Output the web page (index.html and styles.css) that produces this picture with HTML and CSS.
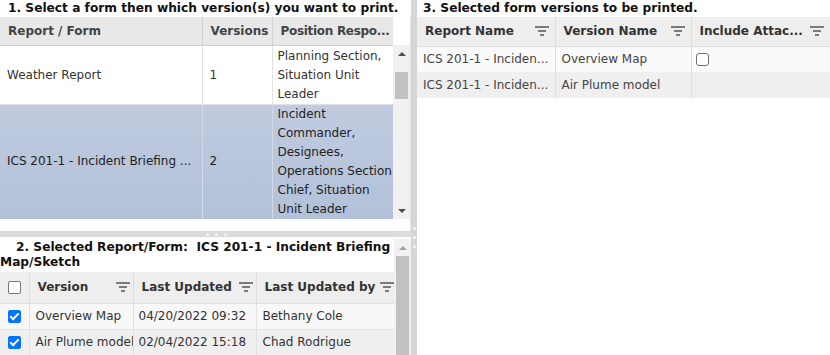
FILE: index.html
```html
<!DOCTYPE html>
<html lang="en">

<head>
    <meta charset="UTF-8">
    <title>Print Forms</title>
    <link rel="stylesheet" href="styles.css">
</head>

<body>
    <div class="layout">
        <div class="left-pane">
            <div class="section-one">
                <div class="pane-title">1. Select a form then which version(s) you want to print.</div>
                <div class="grid-wrap">
                    <div class="grid-main">
                        <table class="grid forms-grid">
                            <colgroup>
                                <col style="width: 202px">
                                <col style="width: 70px">
                                <col>
                            </colgroup>
                            <thead>
                                <tr>
                                    <th>Report / Form</th>
                                    <th>Versions</th>
                                    <th class="tight">Position Respo...</th>
                                </tr>
                            </thead>
                            <tbody>
                                <tr class="first-row">
                                    <td>Weather Report</td>
                                    <td>1</td>
                                    <td>Planning Section, Situation Unit Leader</td>
                                </tr>
                                <tr class="selected">
                                    <td>ICS 201-1 - Incident Briefing ...</td>
                                    <td>2</td>
                                    <td>Incident Commander, Designees, Operations Section Chief, Situation Unit Leader</td>
                                </tr>
                            </tbody>
                        </table>
                    </div>
                    <div class="scrollbar grid-scroll">
                        <div class="arrow up"></div>
                        <div class="thumb short"></div>
                        <div class="track"></div>
                        <div class="arrow down"></div>
                    </div>
                </div>
            </div>

            <div class="splitter-h"><span></span><span></span><span></span></div>

            <div class="section-two">
                <div class="section-two-main">
                    <div class="section-two-title"><span class="indent"></span>2. Selected Report/Form:&nbsp; ICS 201-1 - Incident Briefing Map/Sketch</div>
                    <table class="grid versions-grid">
                        <colgroup>
                            <col style="width: 29px">
                            <col style="width: 104px">
                            <col style="width: 123px">
                            <col>
                        </colgroup>
                        <thead>
                            <tr>
                                <th class="check-cell"><span class="checkbox"></span></th>
                                <th><div class="th-inner">Version <svg class="filter" viewBox="0 0 14 10"><path d="M0 1h14M3 5h8M5 9h4"/></svg></div></th>
                                <th><div class="th-inner">Last Updated <svg class="filter" viewBox="0 0 14 10"><path d="M0 1h14M3 5h8M5 9h4"/></svg></div></th>
                                <th><div class="th-inner">Last Updated by <svg class="filter" viewBox="0 0 14 10"><path d="M0 1h14M3 5h8M5 9h4"/></svg></div></th>
                            </tr>
                        </thead>
                        <tbody>
                            <tr>
                                <td class="check-cell"><span class="checkbox checked"></span></td>
                                <td>Overview Map</td>
                                <td>04/20/2022 09:32</td>
                                <td>Bethany Cole</td>
                            </tr>
                            <tr class="alt">
                                <td class="check-cell"><span class="checkbox checked"></span></td>
                                <td>Air Plume model</td>
                                <td>02/04/2022 15:18</td>
                                <td>Chad Rodrigue</td>
                            </tr>
                        </tbody>
                    </table>
                </div>
                <div class="scrollbar section-scroll">
                    <div class="arrow up"></div>
                    <div class="thumb long"></div>
                </div>
            </div>
        </div>

        <div class="splitter-v"><span></span><span></span><span></span></div>

        <div class="right-pane">
            <div class="pane-title right-title">3. Selected form versions to be printed.</div>
            <table class="grid print-grid">
                <colgroup>
                    <col style="width: 138px">
                    <col style="width: 136px">
                    <col>
                </colgroup>
                <thead>
                    <tr>
                        <th><div class="th-inner">Report Name <svg class="filter" viewBox="0 0 14 10"><path d="M0 1h14M3 5h8M5 9h4"/></svg></div></th>
                        <th><div class="th-inner">Version Name <svg class="filter" viewBox="0 0 14 10"><path d="M0 1h14M3 5h8M5 9h4"/></svg></div></th>
                        <th><div class="th-inner">Include Attac... <svg class="filter" viewBox="0 0 14 10"><path d="M0 1h14M3 5h8M5 9h4"/></svg></div></th>
                    </tr>
                </thead>
                <tbody>
                    <tr>
                        <td>ICS 201-1 - Inciden...</td>
                        <td>Overview Map</td>
                        <td><span class="checkbox plain"></span></td>
                    </tr>
                    <tr class="alt">
                        <td>ICS 201-1 - Inciden...</td>
                        <td>Air Plume model</td>
                        <td></td>
                    </tr>
                </tbody>
            </table>
        </div>
    </div>
</body>

</html>
```

FILE: styles.css
```css
body {
    margin: 0;
    font-family: "DejaVu Sans", Verdana, sans-serif;
    font-size: 12px;
    color: #333;
    background: #fff;
    overflow: hidden;
}

.layout {
    display: flex;
    height: 355px;
}

.left-pane {
    width: 411px;
    display: flex;
    flex-direction: column;
}

.right-pane {
    flex: 1;
    min-width: 0;
}

.pane-title {
    height: 17px;
    line-height: 16px;
    font-weight: bold;
    font-size: 12.2px;
    color: #111;
    padding-left: 8px;
    white-space: nowrap;
}

.right-title {
    padding-left: 6px;
}

/* grids */

.grid {
    width: 100%;
    border-collapse: collapse;
    table-layout: fixed;
}

.grid th {
    text-align: left;
    font-weight: bold;
    color: #333;
    white-space: nowrap;
    overflow: hidden;
    border-left: 1px solid #dcdcdc;
    padding: 0 0 0 8px;
}

.grid th:first-child,
.grid td:first-child {
    border-left: none;
}

.grid td {
    border-left: 1px solid #e2e2e2;
    padding: 0 0 0 7px;
    white-space: nowrap;
    overflow: hidden;
}

.th-inner {
    display: flex;
    align-items: center;
    justify-content: space-between;
    padding-right: 6px;
}

.filter {
    width: 14px;
    height: 10px;
    flex: none;
    fill: none;
    stroke: #555;
    stroke-width: 1.4;
}

/* section one */

.section-one {
    height: 231px;
    display: flex;
    flex-direction: column;
}

.grid-wrap {
    flex: 1;
    display: flex;
    border-right: 1px solid #e4e4e4;
}

.grid-main {
    flex: 1;
    min-width: 0;
}

.forms-grid thead tr {
    height: 28px;
    background: #e8e8e8;
    border-bottom: 1px solid #cfcfcf;
}

.forms-grid th {
    color: #444;
    border-left-color: #d2d2d2;
}

.forms-grid th.tight {
    letter-spacing: -0.3px;
}

.forms-grid td {
    line-height: 19px;
    white-space: normal;
    vertical-align: middle;
}

.forms-grid tr.first-row td {
    height: 57px;
    padding-top: 1px;
    border-bottom: 1px solid #e2e2e2;
}

.forms-grid tr.selected {
    background: linear-gradient(#c0cbdf, #b2c1d9);
}

.forms-grid tr.selected td {
    height: 114px;
    color: #222;
    border-left-color: #d3dae6;
}

.forms-grid td:last-child {
    padding-left: 5px;
    padding-right: 0;
}

/* scrollbars */

.scrollbar {
    width: 17px;
    background: #f1f1f1;
    display: flex;
    flex-direction: column;
    align-items: center;
}

.grid-scroll {
    margin-top: 28px;
    margin-bottom: 12px;
}

.arrow {
    height: 17px;
    width: 17px;
    display: flex;
    align-items: center;
    justify-content: center;
}

.arrow::before {
    content: "";
    border-left: 4px solid transparent;
    border-right: 4px solid transparent;
}

.arrow.up::before {
    border-bottom: 4px solid #505050;
}

.arrow.down::before {
    border-top: 4px solid #505050;
}

.thumb {
    width: 13px;
    background: #c1c1c1;
}

.thumb.short {
    height: 27px;
    margin-top: 10px;
}

.track {
    flex: 1;
}

.section-scroll {
    margin-top: 2px;
}

.section-scroll .arrow.up::before {
    border-bottom-color: #a3a3a3;
}

.thumb.long {
    flex: 1;
}

/* splitters */

.splitter-h {
    height: 6px;
    background: #dcdcdc;
    display: flex;
    justify-content: center;
    align-items: center;
    gap: 6px;
    padding-left: 21px;
}

.splitter-h span,
.splitter-v span {
    width: 3px;
    height: 3px;
    border-radius: 50%;
    background: #f4f4f4;
}

.splitter-v {
    width: 6px;
    background: #d6d6d6;
    display: flex;
    flex-direction: column;
    justify-content: center;
    align-items: center;
    gap: 6px;
    padding-top: 120px;
    box-sizing: border-box;
}

/* section two */

.section-two {
    flex: 1;
    display: flex;
    min-height: 0;
    overflow: hidden;
}

.section-two-main {
    flex: 1;
    min-width: 0;
}

.section-two-title {
    font-weight: bold;
    font-size: 12.2px;
    color: #111;
    line-height: 15px;
    padding-top: 3px;
    height: 35px;
    box-sizing: border-box;
}

.indent {
    display: inline-block;
    width: 16px;
}

.versions-grid thead tr {
    height: 31px;
    background: #eeeeee;
    border-bottom: 1px solid #e0e0e0;
}

.versions-grid tbody tr {
    height: 26px;
    background: #f8f8f8;
    border-bottom: 1px solid #e8e8e8;
}

.versions-grid tbody tr.alt {
    background: #efefef;
}

.versions-grid th:nth-child(2) {
    padding-left: 8px;
}

.versions-grid td {
    padding-left: 6px;
}

.versions-grid td:nth-child(3) {
    padding-left: 5px;
}

.versions-grid .th-inner {
    padding-right: 3px;
}

.versions-grid th:last-child .th-inner {
    padding-right: 0;
}

.grid .check-cell {
    padding: 0;
    text-align: center;
}

.checkbox {
    display: inline-block;
    width: 11px;
    height: 11px;
    border: 1px solid #767676;
    border-radius: 2px;
    background: #fff;
    vertical-align: middle;
    position: relative;
}

.checkbox.checked {
    background: #0075ff;
    border-color: #0075ff;
}

.checkbox.checked::after {
    content: "";
    position: absolute;
    left: 3px;
    top: 0px;
    width: 3px;
    height: 7px;
    border: solid #fff;
    border-width: 0 2px 2px 0;
    transform: rotate(45deg);
}

.checkbox.plain {
    border-color: #6f6f6f;
    border-radius: 3px;
}

/* section three */

.print-grid thead tr {
    height: 29px;
    background: #eeeeee;
    border-bottom: 1px solid #dddddd;
}

.print-grid th {
    padding-left: 8px;
}

.print-grid tbody tr {
    height: 26px;
    background: #fafafa;
}

.print-grid tbody tr.alt {
    background: #efefef;
}

.print-grid td {
    padding-left: 6px;
    color: #444;
    border-left-color: #dedede;
}

.print-grid td:last-child {
    padding-left: 4px;
}
```
